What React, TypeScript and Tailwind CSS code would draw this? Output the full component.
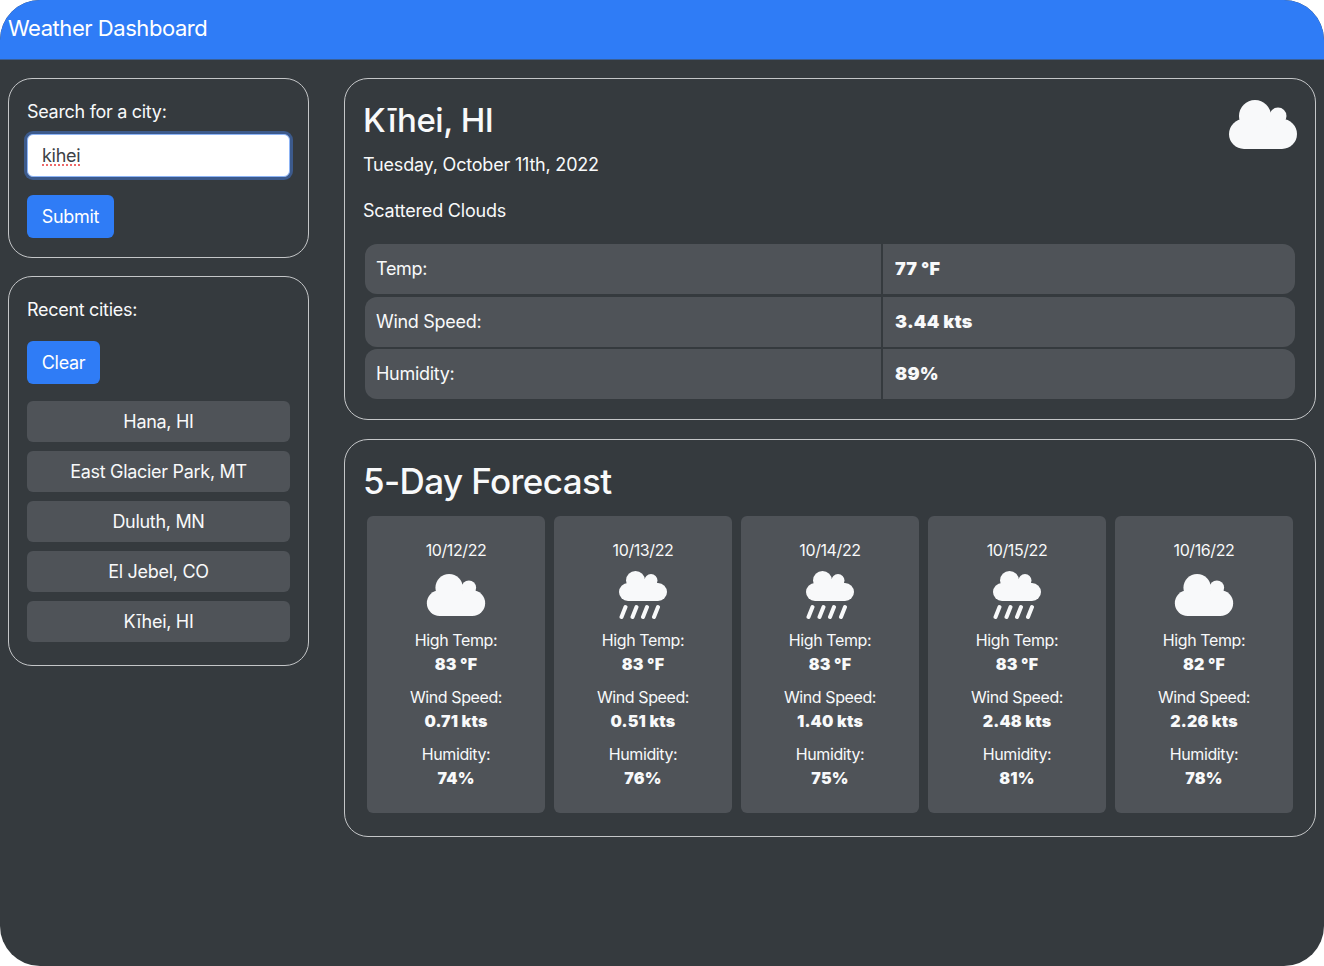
const recent = ["Hana, HI", "East Glacier Park, MT", "Duluth, MN", "El Jebel, CO", "Kīhei, HI"];

const current = [
  { label: "Temp:", value: "77 °F" },
  { label: "Wind Speed:", value: "3.44 kts" },
  { label: "Humidity:", value: "89%" },
];

const forecast = [
  { date: "10/12/22", icon: "cloud", temp: "83 °F", wind: "0.71 kts", humidity: "74%" },
  { date: "10/13/22", icon: "rain", temp: "83 °F", wind: "0.51 kts", humidity: "76%" },
  { date: "10/14/22", icon: "rain", temp: "83 °F", wind: "1.40 kts", humidity: "75%" },
  { date: "10/15/22", icon: "rain", temp: "83 °F", wind: "2.48 kts", humidity: "81%" },
  { date: "10/16/22", icon: "cloud", temp: "82 °F", wind: "2.26 kts", humidity: "78%" },
];

function CloudIcon({ className }: { className: string }) {
  return (
    <svg viewBox="0 0 68 49" className={className} fill="#f8f9fa">
      <rect x="0" y="19" width="68" height="30" rx="15" />
      <circle cx="26" cy="16" r="16" />
      <circle cx="49" cy="16" r="8.5" />
    </svg>
  );
}

function RainIcon({ className }: { className: string }) {
  return (
    <svg viewBox="0 0 48 48" className={className} fill="#f8f9fa">
      <rect x="0" y="12" width="48" height="18" rx="9" />
      <circle cx="16.5" cy="9.5" r="9.5" />
      <circle cx="32" cy="9.5" r="6.5" />
      <rect x="10" y="8" width="22" height="8" />
      <g stroke="#f8f9fa" strokeWidth="4" strokeLinecap="round">
        <line x1="6.5" y1="36" x2="2.5" y2="46" />
        <line x1="17.5" y1="36" x2="13.5" y2="46" />
        <line x1="28" y1="36" x2="24" y2="46" />
        <line x1="39" y1="36" x2="35" y2="46" />
      </g>
    </svg>
  );
}

export default function App() {
  return (
    <div className="min-h-[966px] rounded-[40px] bg-[#353a3e] text-[#f8f9fa] font-['Inter',sans-serif] overflow-hidden">
      <header className="h-[60px] bg-[#2f7cf6] border-b border-[#3a5f96] flex items-center px-2 pb-1 text-white text-[22px] tracking-[-0.45px] leading-none">
        Weather Dashboard
      </header>

      <div className="flex gap-[35px] pt-[18px] pl-2 pr-2">
        {/* Sidebar */}
        <aside className="w-[301px] shrink-0 flex flex-col gap-[18px] tracking-[-0.3px]">
          <section className="h-[180px] rounded-3xl border-[1.5px] border-[#c4c6c8] px-[18px] pt-[21px]">
            <label className="block text-lg leading-6 mb-[10px]">Search for a city:</label>
            <input
              readOnly
              value="kihei"
              className="w-full h-[43px] rounded-md bg-white px-[14px] text-lg text-[#3c4146] border border-[#8db4f5] outline-none ring-[3px] ring-[#3c5a8c] underline decoration-dotted decoration-2 decoration-[#ee6a6a] underline-offset-2"
            />
            <button className="mt-[18px] h-[43px] w-[87px] rounded-md bg-[#2f7cf6] text-white text-lg">Submit</button>
          </section>

          <section className="h-[390px] rounded-3xl border-[1.5px] border-[#c4c6c8] px-[18px] pt-[21px]">
            <div className="text-lg leading-6">Recent cities:</div>
            <button className="mt-[19px] h-[43px] w-[73px] rounded-md bg-[#2f7cf6] text-white text-lg">Clear</button>
            <div className="mt-[17px] flex flex-col gap-[9px]">
              {recent.map((city) => (
                <div key={city} className="h-[41px] rounded-md bg-[#4f5358] flex items-center justify-center text-lg">
                  {city}
                </div>
              ))}
            </div>
          </section>
        </aside>

        {/* Main */}
        <main className="flex-1 flex flex-col gap-[18px]">
          <section className="h-[342px] rounded-3xl border-[1.5px] border-[#c4c6c8] px-[18px] pt-[19px] relative">
            <CloudIcon className="absolute top-[21px] right-[18px] w-[68px] h-[49px]" />
            <h1 className="text-[33px] leading-[44px] font-medium tracking-[-0.5px]">Kīhei, HI</h1>
            <p className="mt-[11px] text-lg leading-6 tracking-[-0.2px]">Tuesday, October 11th, 2022</p>
            <p className="mt-[22px] text-lg leading-6 tracking-[-0.2px]">Scattered Clouds</p>
            <div className="mx-[2px] mt-[21px] flex flex-col gap-[2.5px]">
              {current.map((row) => (
                <div key={row.label} className="grid grid-cols-[516px_1fr] gap-[2px] h-[50px]">
                  <div className="rounded-l-xl bg-[#4f5358] flex items-center px-[11px] text-lg tracking-[-0.3px]">{row.label}</div>
                  <div className="rounded-r-xl bg-[#4f5358] flex items-center px-3 text-lg font-black tracking-[0.2px]">{row.value}</div>
                </div>
              ))}
            </div>
          </section>

          <section className="mt-px h-[398px] rounded-3xl border-[1.5px] border-[#c4c6c8] px-[22px] pt-[18px]">
            <h2 className="-ml-1 text-[35px] leading-[46px] font-medium tracking-[-0.6px]">5-Day Forecast</h2>
            <div className="mt-[12px] flex gap-[9px]">
              {forecast.map((day) => (
                <div key={day.date} className="flex-1 h-[297px] rounded-md bg-[#4f5358] pt-[22px] text-center text-base leading-6 tracking-[-0.4px]">
                  <div>{day.date}</div>
                  <div className="h-[66px] flex items-center justify-center">
                    {day.icon === "cloud" ? (
                      <CloudIcon className="w-[60px] h-[42px]" />
                    ) : (
                      <RainIcon className="w-[48px] h-[48px]" />
                    )}
                  </div>
                  <div>High Temp:</div>
                  <div className="font-black tracking-[0.2px]">{day.temp}</div>
                  <div className="mt-[9px]">Wind Speed:</div>
                  <div className="font-black tracking-[0.2px]">{day.wind}</div>
                  <div className="mt-[9px]">Humidity:</div>
                  <div className="font-black tracking-[0.2px]">{day.humidity}</div>
                </div>
              ))}
            </div>
          </section>
        </main>
      </div>
    </div>
  );
}
